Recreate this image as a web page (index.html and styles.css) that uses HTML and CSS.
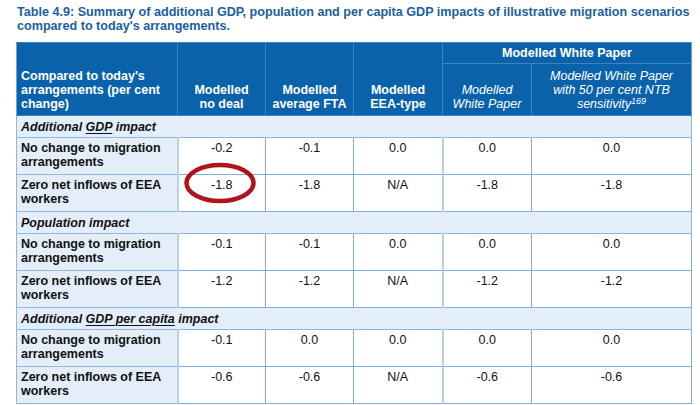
FILE: index.html
```html
<!DOCTYPE html>
<html lang="en">
<head>
<meta charset="utf-8">
<title>Table 4.9</title>
<link rel="stylesheet" href="styles.css">
</head>
<body>
<div class="page">
  <h1 class="title">Table 4.9: Summary of additional GDP, population and per capita GDP impacts of illustrative migration scenarios<br>compared to today's arrangements.</h1>
  <div class="table-wrap">
    <table class="impact">
      <colgroup>
        <col class="c-label">
        <col class="c-88">
        <col class="c-88">
        <col class="c-89">
        <col class="c-89">
        <col class="c-wide">
      </colgroup>
      <thead>
        <tr class="head-top">
          <th rowspan="2" class="label-head">Compared to today's<br>arrangements (per cent<br>change)</th>
          <th rowspan="2">Modelled<br>no deal</th>
          <th rowspan="2">Modelled<br>average FTA</th>
          <th rowspan="2">Modelled<br>EEA-type</th>
          <th colspan="2" class="group">Modelled White Paper</th>
        </tr>
        <tr class="head-sub">
          <th class="sub">Modelled<br>White Paper</th>
          <th class="sub">Modelled White Paper<br>with 50 per cent NTB<br>sensitivity<sup>169</sup></th>
        </tr>
      </thead>
      <tbody>
        <tr class="section"><td colspan="6">Additional <u>GDP</u> impact</td></tr>
        <tr class="data first"><th>No change to migration arrangements</th><td>-0.2</td><td>-0.1</td><td>0.0</td><td>0.0</td><td>0.0</td></tr>
        <tr class="data"><th>Zero net inflows of EEA workers</th><td>-1.8</td><td>-1.8</td><td>N/A</td><td>-1.8</td><td>-1.8</td></tr>
        <tr class="section"><td colspan="6">Population impact</td></tr>
        <tr class="data first"><th>No change to migration arrangements</th><td>-0.1</td><td>-0.1</td><td>0.0</td><td>0.0</td><td>0.0</td></tr>
        <tr class="data"><th>Zero net inflows of EEA workers</th><td>-1.2</td><td>-1.2</td><td>N/A</td><td>-1.2</td><td>-1.2</td></tr>
        <tr class="section"><td colspan="6">Additional <u>GDP per capita</u> impact</td></tr>
        <tr class="data first"><th>No change to migration arrangements</th><td>-0.1</td><td>0.0</td><td>0.0</td><td>0.0</td><td>0.0</td></tr>
        <tr class="data"><th>Zero net inflows of EEA workers</th><td>-0.6</td><td>-0.6</td><td>N/A</td><td>-0.6</td><td>-0.6</td></tr>
      </tbody>
    </table>
    <svg class="ring" width="80" height="48" viewBox="0 0 80 48" aria-hidden="true">
      <ellipse cx="40" cy="24" rx="33.5" ry="18" fill="none" stroke="#b0141a" stroke-width="4.5"/>
    </svg>
  </div>
</div>
</body>
</html>
```

FILE: styles.css
```css
html, body {
  margin: 0;
  padding: 0;
  background: #ffffff;
}

body {
  font-family: "Liberation Sans", Arial, sans-serif;
  color: #111111;
}

.page {
  padding: 5px 0 0 17px;
}

.title {
  margin: 0 0 9px 0;
  font-size: 12.6px;
  line-height: 14px;
  font-weight: bold;
  color: #1b5fa0;
  white-space: nowrap;
}

.table-wrap {
  position: relative;
  margin-left: -1px;
  width: 675px;
}

.impact {
  width: 675px;
  table-layout: fixed;
  border-collapse: collapse;
  font-size: 12.5px;
  line-height: 14px;
}

.c-label { width: 161px; }
.c-88 { width: 88px; }
.c-89 { width: 89px; }
.c-wide { width: 160px; }

.impact thead th {
  background: #0a62ab;
  color: #ffffff;
  font-weight: bold;
  text-align: center;
  vertical-align: bottom;
  padding: 0 3px 4px 3px;
  border: 1px solid #3d84c0;
}

.impact thead tr.head-top {
  height: 21px;
}

.impact thead tr.head-sub {
  height: 52px;
}

.impact thead th.label-head {
  text-align: left;
  padding-left: 4px;
  border-left-color: #6fa4d4;
}

.impact thead th.group {
  vertical-align: middle;
  padding-bottom: 0;
  border-right-color: #6fa4d4;
}

.impact thead th.sub {
  font-weight: normal;
  font-style: italic;
}

.impact thead th.sub:last-child {
  border-right-color: #6fa4d4;
}

.impact sup {
  font-size: 9px;
  line-height: 0;
  vertical-align: 4px;
}

.impact tbody tr.section {
  height: 22px;
}

.impact tbody tr.section td {
  background: #e3eef8;
  font-weight: bold;
  font-style: italic;
  padding: 0 4px;
  vertical-align: middle;
  border: 1px solid #8db9e0;
}

.impact tbody tr.section u {
  text-decoration-thickness: 1px;
  text-underline-offset: 2px;
}

.impact tbody tr.data {
  height: 37px;
}

.impact tbody tr.data th {
  background: #e3eef8;
  font-weight: bold;
  text-align: left;
  vertical-align: top;
  padding: 3px 4px 0 4px;
  border: 1px solid #8db9e0;
  border-right: 2px solid #b5d1ec;
}

.impact tbody tr.data td {
  background: #ffffff;
  text-align: center;
  vertical-align: top;
  padding: 3px 3px 0 3px;
  border: 1px solid #7eafdc;
}

.impact tbody tr.data td:nth-child(4) {
  border-right: 2px solid #b5d1ec;
}

.ring {
  position: absolute;
  left: 164px;
  top: 117px;
}
```
